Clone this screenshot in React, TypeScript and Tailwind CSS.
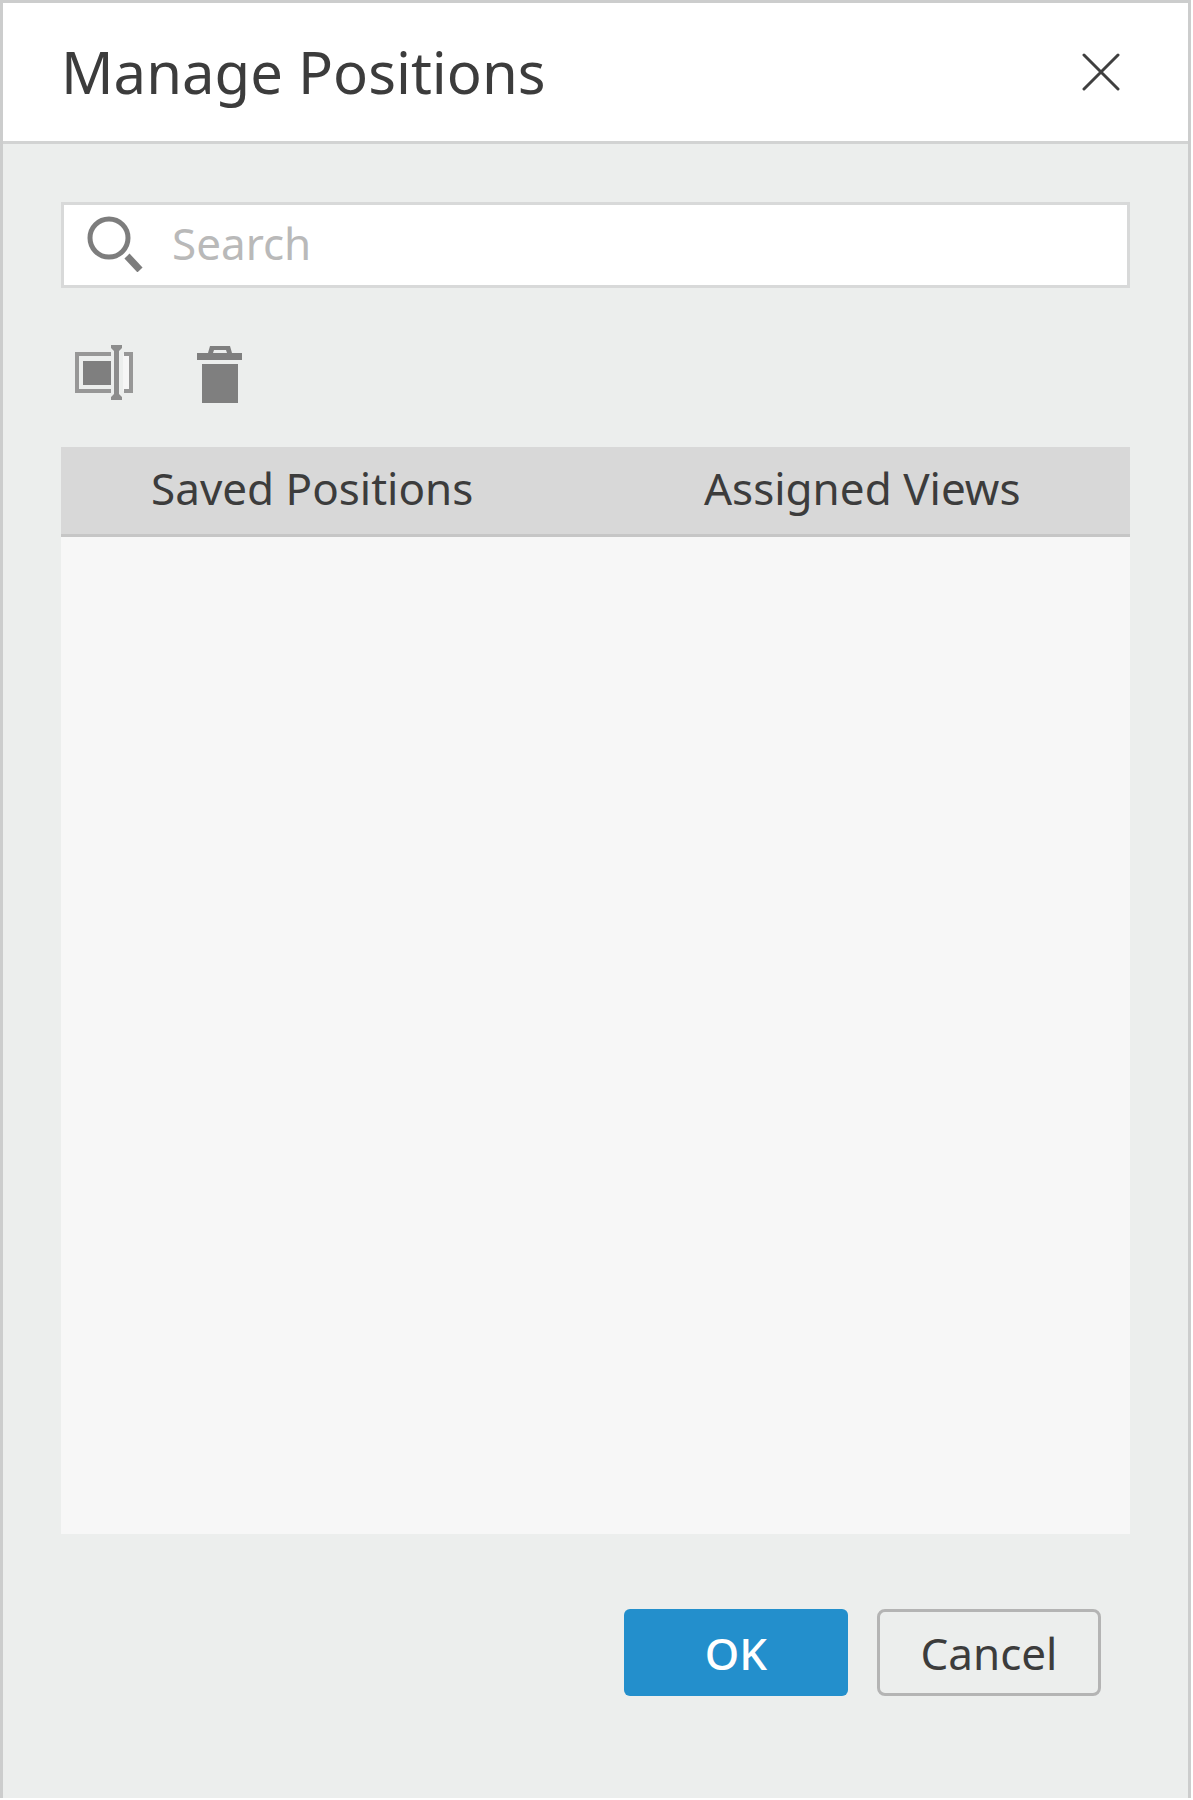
import React, { useState } from 'react';

const SearchIcon = () => (
  <svg viewBox="0 0 58 58" className="w-[58px] h-[58px] shrink-0" fill="none" stroke="#7d7d7d" aria-hidden="true">
    <circle cx="24" cy="24" r="19" strokeWidth="5" />
    <path d="M42 42 L55 56" strokeWidth="7" />
  </svg>
);

const RenameIcon = () => (
  <svg viewBox="0 0 58 58" className="w-[58px] h-[58px]" aria-hidden="true">
    <path d="M48 9 H56 V46 H48 Z" fill="#f6f6f6" />
    <path d="M36 9 H2 V46 H36" fill="none" stroke="#979797" strokeWidth="4" />
    <path d="M49 9 H56 V46 H49" fill="none" stroke="#979797" strokeWidth="4" />
    <rect x="8" y="16" width="28" height="24" fill="#7f7f7f" />
    <path d="M36 0 H47 V3 L44 6 V49 L47 52 V55 H36 V52 L39 49 V6 L36 3 Z" fill="#8d8d8d" />
  </svg>
);

const TrashIcon = () => (
  <svg viewBox="0 0 58 58" className="w-[58px] h-[58px]" fill="#7f7f7f" aria-hidden="true">
    <path d="M18 8 L20 1 H40 L42 8 H37 L36 5 H24 L23 8 Z" />
    <rect x="7" y="8" width="45" height="7" />
    <rect x="12" y="19" width="36" height="39" />
  </svg>
);

const CloseIcon = () => (
  <svg viewBox="0 0 38 38" className="w-[38px] h-[38px]" fill="none" stroke="#3f3f3f" strokeWidth="3" strokeLinecap="round" aria-hidden="true">
    <path d="M2 2 L36 36 M36 2 L2 36" />
  </svg>
);

const App: React.FC = () => {
  const [query, setQuery] = useState('');

  return (
    <div className="min-h-screen flex flex-col bg-white pr-[2px] pb-[2px] font-['Noto_Sans',sans-serif] text-[#3c3c3c]">
      <div role="dialog" aria-labelledby="dialog-title" className="flex-1 flex flex-col bg-[#eceeed] border-[3px] border-b-0 border-[#cccdcd]">
        <header className="flex items-center justify-between h-[141px] px-[58px] bg-white border-b-[3px] border-[#d2d3d3]">
          <h1 id="dialog-title" className="text-[58px] leading-[80px]">Manage Positions</h1>
          <button type="button" aria-label="Close" className="flex items-center justify-center w-[58px] h-[58px]">
            <CloseIcon />
          </button>
        </header>

        <main className="flex-1 flex flex-col px-[58px] pt-[58px] pb-[102px]">
          <label className="flex items-center gap-[29px] h-[86px] pb-1 pl-[21px] pr-6 bg-white border-[3px] border-[#d8d9d9]">
            <SearchIcon />
            <input
              type="text"
              aria-label="Search"
              placeholder="Search"
              value={query}
              onChange={(e) => setQuery(e.target.value)}
              className="flex-1 min-w-0 bg-transparent outline-none text-[44px] leading-[60px] placeholder:text-[#b9b9b9]"
            />
          </label>

          <div className="flex gap-[29px] mt-[43px] mb-[30px]">
            <button type="button" aria-label="Rename" className="p-[14px]"><RenameIcon /></button>
            <button type="button" aria-label="Delete" className="p-[14px]"><TrashIcon /></button>
          </div>

          <div className="flex-1 bg-[#f7f7f7]">
            <table className="w-full table-fixed border-collapse">
              <thead>
                <tr className="h-[88px] bg-[#d8d8d8] border-b-[3px] border-[#c6c6c6] text-[44px] leading-[60px]">
                  <th scope="col" className="w-[47%] pb-1 font-normal">Saved Positions</th>
                  <th scope="col" className="pb-1 pl-[31px] font-normal">Assigned Views</th>
                </tr>
              </thead>
              <tbody />
            </table>
          </div>

          <footer className="flex justify-end gap-[29px] mt-[75px] pr-[29px]">
            <button type="button" className="w-[224px] h-[87px] rounded-md bg-[#238fcc] text-white text-[44px] leading-[60px] font-medium">OK</button>
            <button type="button" className="w-[224px] h-[87px] rounded-lg border-[3px] border-[#b4b4b4] text-[44px] leading-[60px]">Cancel</button>
          </footer>
        </main>
      </div>
    </div>
  );
};

export default App;
